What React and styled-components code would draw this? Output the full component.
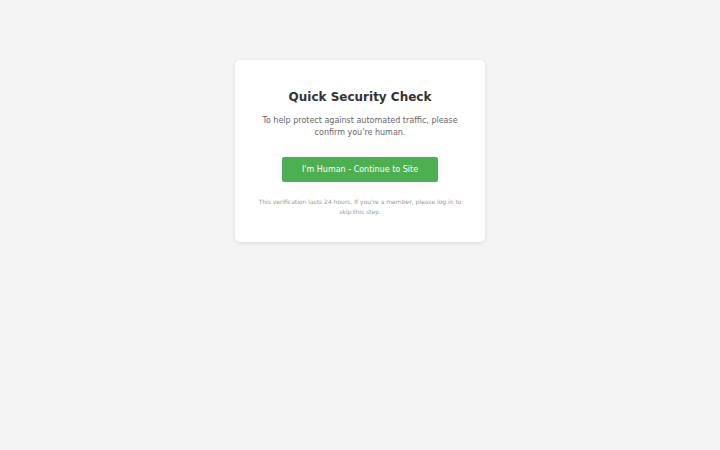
import React from "react";
import styled, { createGlobalStyle } from "styled-components";

const Global = createGlobalStyle`
  html, body { margin: 0; padding: 0; background: #f4f4f4; }
  body { font-family: "DejaVu Sans", "Liberation Sans", sans-serif; }
`;

const Page = styled.div`
  min-height: 450px;
  display: flex;
  justify-content: center;
  align-items: flex-start;
  padding-top: 60px;
  box-sizing: border-box;
`;

const Card = styled.div`
  width: 250px;
  box-sizing: border-box;
  background: #fff;
  border-radius: 5px;
  box-shadow: 0 1px 4px rgba(0, 0, 0, 0.12);
  padding: 29px 20px 25px;
  text-align: center;
  display: flex;
  flex-direction: column;
  align-items: center;
`;

const Title = styled.h1`
  margin: 0;
  font-size: 12px;
  line-height: 17px;
  font-weight: bold;
  color: #333;
`;

const Text = styled.p`
  margin: 9px 0 0;
  font-size: 8px;
  line-height: 12px;
  color: #666;
`;

const Button = styled.button`
  margin-top: 18px;
  width: 156px;
  height: 25px;
  border: none;
  border-radius: 2px;
  background: #4caf50;
  color: #fff;
  font-family: inherit;
  font-size: 8px;
  cursor: pointer;
`;

const Note = styled.p`
  margin: 15px 0 0;
  font-size: 6px;
  line-height: 10px;
  color: #999;
`;

export default function App() {
  return (
    <>
      <Global />
      <Page>
        <Card>
          <Title>Quick Security Check</Title>
          <Text>
            To help protect against automated traffic, please confirm you're human.
          </Text>
          <Button>I'm Human - Continue to Site</Button>
          <Note>
            This verification lasts 24 hours. If you're a member, please log in to skip this step.
          </Note>
        </Card>
      </Page>
    </>
  );
}
